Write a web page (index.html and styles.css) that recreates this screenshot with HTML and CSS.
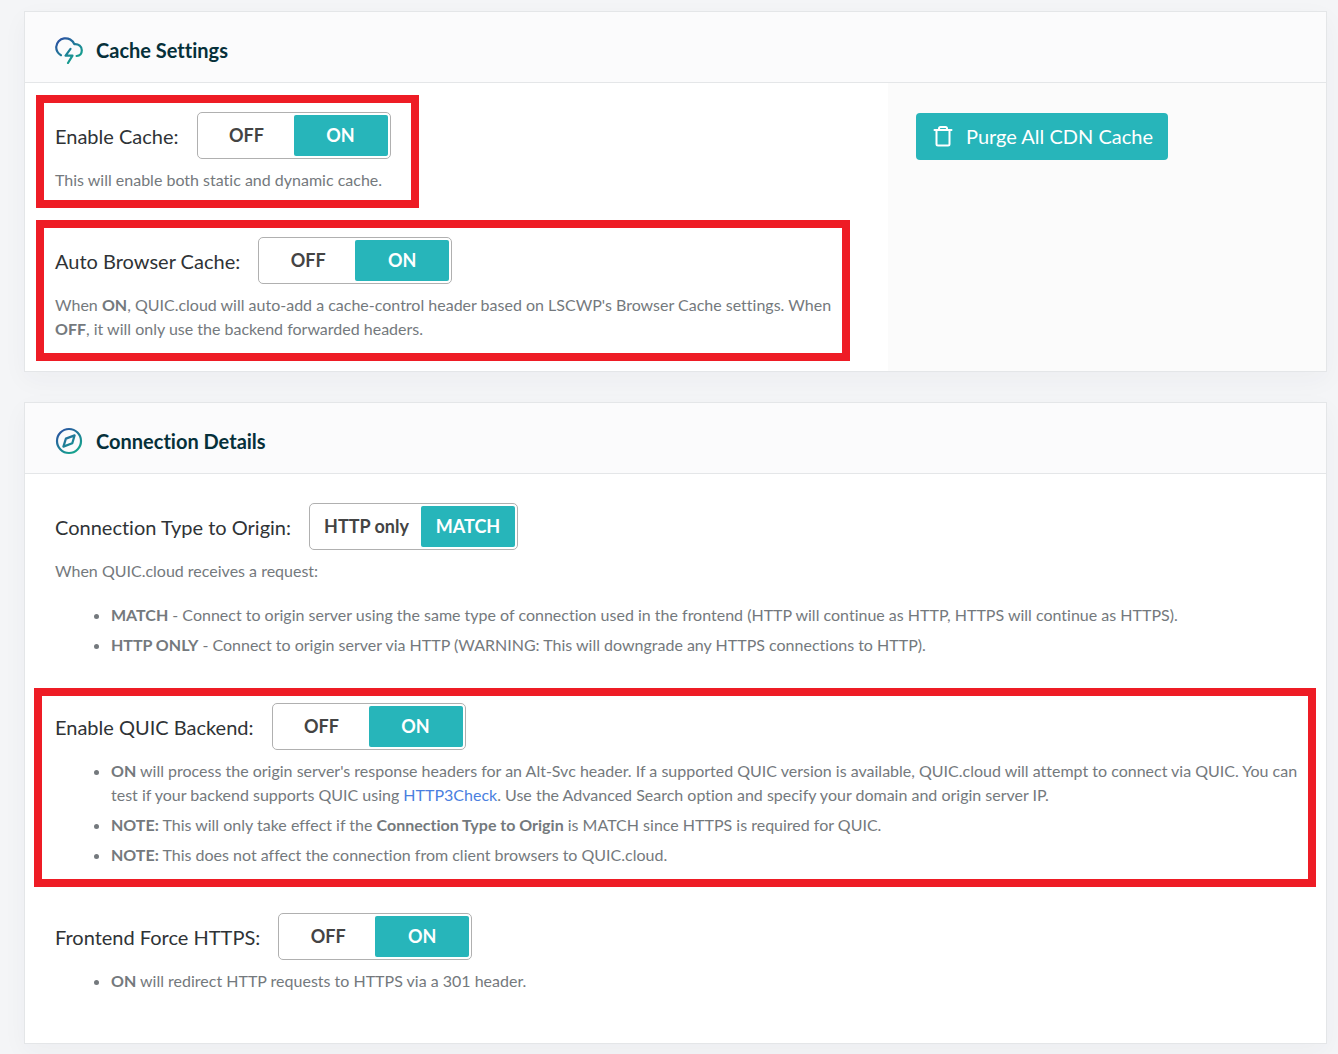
FILE: index.html
```html
<!DOCTYPE html>
<html lang="en">
<head>
<meta charset="utf-8">
<meta name="viewport" content="width=device-width, initial-scale=1">
<title>CDN Config</title>
<link rel="stylesheet" href="styles.css">
</head>
<body>
<main class="page">
  <section class="card">
    <header class="card-header">
      <svg class="card-icon" viewBox="0 0 28 28" aria-hidden="true">
        <defs>
          <linearGradient id="brand" gradientUnits="userSpaceOnUse" x1="4" y1="2" x2="22" y2="26">
            <stop offset="0" stop-color="#2b4fa2"/>
            <stop offset="1" stop-color="#13a88c"/>
          </linearGradient>
        </defs>
        <g fill="none" stroke="url(#brand)" stroke-width="2.200" stroke-linecap="round" stroke-linejoin="round">
          <path d="M6 19.200C3 17.500 1.200 14.500 1.200 11A9.400 9.400 0 0 1 19.300 8.200C23.700 7.800 26.800 10.600 26.800 14.200C26.800 17.600 24.600 19.800 21.600 20"/>
          <path d="M15.500 12.800L10.600 19.600H17.500L13 27"/>
        </g>
      </svg>
      <h2 class="card-title">Cache Settings</h2>
    </header>
    <div class="card-split">
      <div class="card-main">
        <div class="setting highlight highlight-fit">
          <div class="setting-row" role="radiogroup" aria-labelledby="cache-label">
            <span class="setting-label" id="cache-label">Enable Cache:</span>
            <span class="toggle">
              <input type="radio" name="cache" id="cache-off"><label for="cache-off">OFF</label>
              <input type="radio" name="cache" id="cache-on" checked><label for="cache-on">ON</label>
            </span>
          </div>
          <p class="help">This will enable both static and dynamic cache.</p>
        </div>
        <div class="setting highlight highlight-text">
          <div class="setting-row" role="radiogroup" aria-labelledby="browser-label">
            <span class="setting-label" id="browser-label">Auto Browser Cache:</span>
            <span class="toggle">
              <input type="radio" name="browser" id="browser-off"><label for="browser-off">OFF</label>
              <input type="radio" name="browser" id="browser-on" checked><label for="browser-on">ON</label>
            </span>
          </div>
          <p class="help">When <b>ON</b>, QUIC.cloud will auto-add a cache-control header based on LSCWP's Browser Cache settings. When <b>OFF</b>, it will only use the backend forwarded headers.</p>
        </div>
      </div>
      <aside class="card-side">
        <button class="purge" type="button">
          <svg class="purge-icon" viewBox="0 0 20 22" aria-hidden="true">
            <g fill="none" stroke="currentColor" stroke-width="2" stroke-linejoin="round" stroke-linecap="round">
              <path d="M1.500 5H18.500M6 4.500V3.500Q6 2 7.500 2H12.500Q14 2 14 3.500V4.500"/>
              <path d="M3.500 5.500V19Q3.500 20.500 5 20.500H15Q16.500 20.500 16.500 19V5.500"/>
            </g>
          </svg>
          Purge All CDN Cache
        </button>
      </aside>
    </div>
  </section>

  <section class="card">
    <header class="card-header">
      <svg class="card-icon" viewBox="0 0 28 28" aria-hidden="true">
        <g fill="none" stroke="url(#brand)" stroke-width="2.200" stroke-linejoin="round">
          <circle cx="14" cy="14" r="12"/>
          <path d="M19.600 8.400L17.300 16.300L8.400 19.600L10.900 11.600Z"/>
        </g>
      </svg>
      <h2 class="card-title">Connection Details</h2>
    </header>
    <div class="card-body">
      <div class="setting">
        <div class="setting-row" role="radiogroup" aria-labelledby="origin-label">
          <span class="setting-label" id="origin-label">Connection Type to Origin:</span>
          <span class="toggle">
            <input type="radio" name="origin" id="origin-http"><label for="origin-http">HTTP only</label>
            <input type="radio" name="origin" id="origin-match" checked><label for="origin-match">MATCH</label>
          </span>
        </div>
        <p class="help">When QUIC.cloud receives a request:</p>
        <ul class="notes notes-spaced">
          <li><b>MATCH</b> - Connect to origin server using the same type of connection used in the frontend (HTTP will continue as HTTP, HTTPS will continue as HTTPS).</li>
          <li><b>HTTP ONLY</b> - Connect to origin server via HTTP (WARNING: This will downgrade any HTTPS connections to HTTP).</li>
        </ul>
      </div>
      <div class="setting highlight highlight-wide">
        <div class="setting-row" role="radiogroup" aria-labelledby="quic-label">
          <span class="setting-label" id="quic-label">Enable QUIC Backend:</span>
          <span class="toggle">
            <input type="radio" name="quic" id="quic-off"><label for="quic-off">OFF</label>
            <input type="radio" name="quic" id="quic-on" checked><label for="quic-on">ON</label>
          </span>
        </div>
        <ul class="notes">
          <li><b>ON</b> will process the origin server's response headers for an Alt-Svc header. If a supported QUIC version is available, QUIC.cloud will attempt to connect via QUIC. You can test if your backend supports QUIC using <a href="#http3check">HTTP3Check</a>. Use the Advanced Search option and specify your domain and origin server IP.</li>
          <li><b>NOTE:</b> This will only take effect if the <b>Connection Type to Origin</b> is MATCH since HTTPS is required for QUIC.</li>
          <li><b>NOTE:</b> This does not affect the connection from client browsers to QUIC.cloud.</li>
        </ul>
      </div>
      <div class="setting">
        <div class="setting-row" role="radiogroup" aria-labelledby="https-label">
          <span class="setting-label" id="https-label">Frontend Force HTTPS:</span>
          <span class="toggle">
            <input type="radio" name="https" id="https-off"><label for="https-off">OFF</label>
            <input type="radio" name="https" id="https-on" checked><label for="https-on">ON</label>
          </span>
        </div>
        <ul class="notes">
          <li><b>ON</b> will redirect HTTP requests to HTTPS via a 301 header.</li>
        </ul>
      </div>
    </div>
  </section>
</main>
</body>
</html>
```
FILE: styles.css
```css
* {
  box-sizing: border-box;
}

body {
  margin: 0;
  background: #f4f5f7;
  color: #74797d;
  font: 16px/24px Lato, "Noto Sans", sans-serif;
  font-variant-ligatures: none;
}

.page {
  display: flex;
  flex-direction: column;
  gap: 30px;
  padding: 11px 11px 10px 24px;
}

.card {
  background: #fff;
  border: 1px solid #e4e6e8;
  box-shadow: 0 8px 24px rgba(40, 60, 70, 0.04);
}

.card-header {
  display: flex;
  align-items: center;
  gap: 13px;
  padding: 24px 30px 18px;
  background: #fbfbfc;
  border-bottom: 1px solid #e4e6e8;
}

.card-icon {
  width: 28px;
  height: 28px;
}

.card-title {
  margin: 0;
  color: #06303a;
  font-size: 20px;
  font-weight: 700;
  line-height: 28px;
}

.card-split {
  display: grid;
  grid-template-columns: minmax(0, 1fr) 438px;
}

.card-main {
  display: flex;
  flex-direction: column;
  gap: 12px;
  padding: 12px 38px 10px 30px;
}

.card-side {
  padding: 30px 28px;
  background: #fbfbfb;
}

.card-body {
  padding: 29px 30px 50px;
}

.setting-row {
  display: flex;
  align-items: center;
  gap: 18px;
}

.setting-label {
  color: #2f3336;
  font-size: 20px;
  line-height: 28px;
}

.highlight {
  margin: 0 0 0 -19px;
  padding: 9px 8px 12px 11px;
  border: 8px solid #ee1c25;
}

.highlight-fit {
  align-self: flex-start;
  padding: 9px 20px 8px 11px;
}

.highlight-wide {
  margin: 31px -20px 26px -21px;
  padding: 7px 4px 12px 13px;
}

.toggle {
  position: relative;
  display: flex;
  padding: 2px;
  border: 1px solid #b0b0b0;
  border-radius: 5px;
}

.toggle input {
  position: absolute;
  opacity: 0;
}

.toggle label {
  min-width: 94px;
  padding: 0 12px;
  border-radius: 2px;
  color: #444;
  font-size: 18px;
  font-weight: 700;
  line-height: 41px;
  text-align: center;
  cursor: pointer;
}

.toggle input:checked + label {
  background: #27b5ba;
  color: #fff;
}

.help {
  margin: 9px 0 0;
}

.notes {
  display: flex;
  flex-direction: column;
  gap: 6px;
  margin: 9px 0 0;
  padding-left: 56px;
}

.notes-spaced {
  margin-top: 20px;
}

.notes a {
  color: #4a7fe0;
  text-decoration: none;
}

.purge {
  display: flex;
  align-items: center;
  gap: 13px;
  padding: 9px 15px 10px 17px;
  border: 0;
  border-radius: 4px;
  background: #27b5ba;
  color: #fff;
  font: inherit;
  font-size: 20px;
  font-variant-ligatures: none;
  line-height: 28px;
}

.purge-icon {
  width: 20px;
  height: 22px;
}
```
